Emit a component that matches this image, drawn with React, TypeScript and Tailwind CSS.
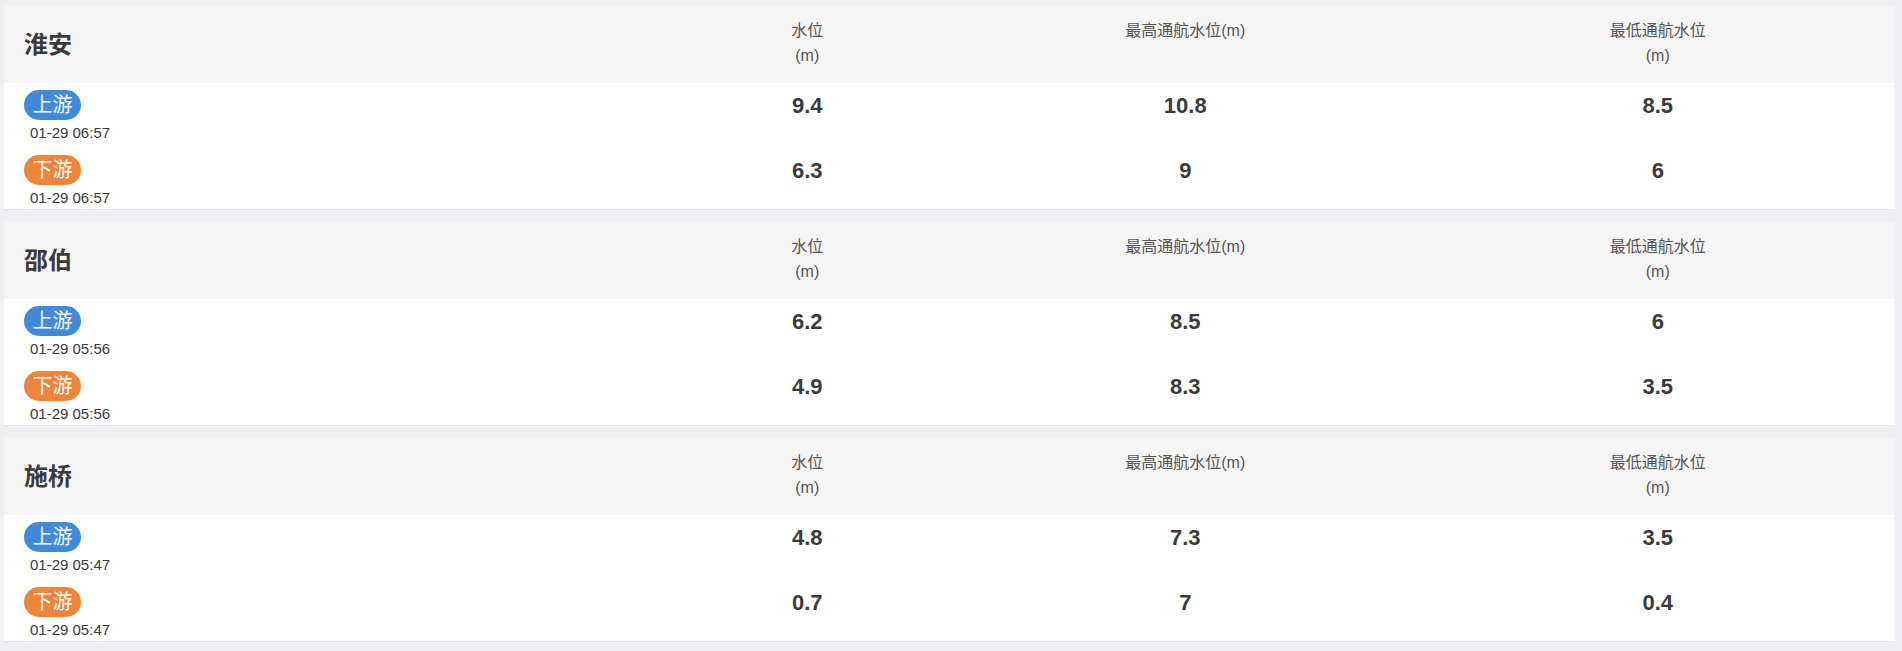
import React from "react";

type Row = { up: boolean; time: string; v: string; hi: string; lo: string };
type Station = { name: string; rows: Row[] };

const data: Station[] = [
  {
    name: "淮安",
    rows: [
      { up: true, time: "01-29 06:57", v: "9.4", hi: "10.8", lo: "8.5" },
      { up: false, time: "01-29 06:57", v: "6.3", hi: "9", lo: "6" },
    ],
  },
  {
    name: "邵伯",
    rows: [
      { up: true, time: "01-29 05:56", v: "6.2", hi: "8.5", lo: "6" },
      { up: false, time: "01-29 05:56", v: "4.9", hi: "8.3", lo: "3.5" },
    ],
  },
  {
    name: "施桥",
    rows: [
      { up: true, time: "01-29 05:47", v: "4.8", hi: "7.3", lo: "3.5" },
      { up: false, time: "01-29 05:47", v: "0.7", hi: "7", lo: "0.4" },
    ],
  },
];

function Card({ s }: { s: Station }) {
  return (
    <div className="bg-white w-[1890px] h-[203px] flex flex-col shadow-[0_1px_0_#e4e4e8]">
      <div className="grid grid-cols-[35%_15%_25%_25%] bg-[#f5f5f5] h-[77px]">
        <div className="flex items-center pl-[20px] text-[24px] font-bold text-[#3a3a3a]">{s.name}</div>
        <div className="text-center pt-[12px] text-[16px] leading-[25px] text-[#555]">
          <div>水位</div>
          <div>(m)</div>
        </div>
        <div className="text-center pt-[12px] text-[16px] leading-[25px] text-[#555]">
          <div>最高通航水位(m)</div>
        </div>
        <div className="text-center pt-[12px] text-[16px] leading-[25px] text-[#555]">
          <div>最低通航水位</div>
          <div>(m)</div>
        </div>
      </div>
      <div className="flex flex-col gap-[12px] pt-[7px]">
        {s.rows.map((r, i) => (
          <div key={i} className="grid grid-cols-[35%_15%_25%_25%]">
            <div className="pl-[20px] flex flex-col items-start">
              <div
                className={
                  "h-[30px] w-[57px] rounded-full flex items-center justify-center text-white text-[20px] leading-[30px] " +
                  (r.up ? "bg-[#4189d9]" : "bg-[#ef843b]")
                }
              >
                {r.up ? "上游" : "下游"}
              </div>
              <div className="ml-[6px] mt-[3px] text-[15px] leading-[20px] text-[#3a3a3a]">{r.time}</div>
            </div>
            <div className="h-[30px] flex items-center justify-center text-[22px] font-bold text-[#3a3a3a]">{r.v}</div>
            <div className="h-[30px] flex items-center justify-center text-[22px] font-bold text-[#3a3a3a]">{r.hi}</div>
            <div className="h-[30px] flex items-center justify-center text-[22px] font-bold text-[#3a3a3a]">{r.lo}</div>
          </div>
        ))}
      </div>
    </div>
  );
}

export default function App() {
  return (
    <div
      className="min-h-[651px] bg-[#efeff4] pl-[4px] pr-[8px] pt-[6px] flex flex-col gap-[13px]"
      style={{ fontFamily: '"Liberation Sans", "Noto Sans CJK SC", sans-serif' }}
    >
      {data.map((s) => (
        <Card key={s.name} s={s} />
      ))}
    </div>
  );
}
